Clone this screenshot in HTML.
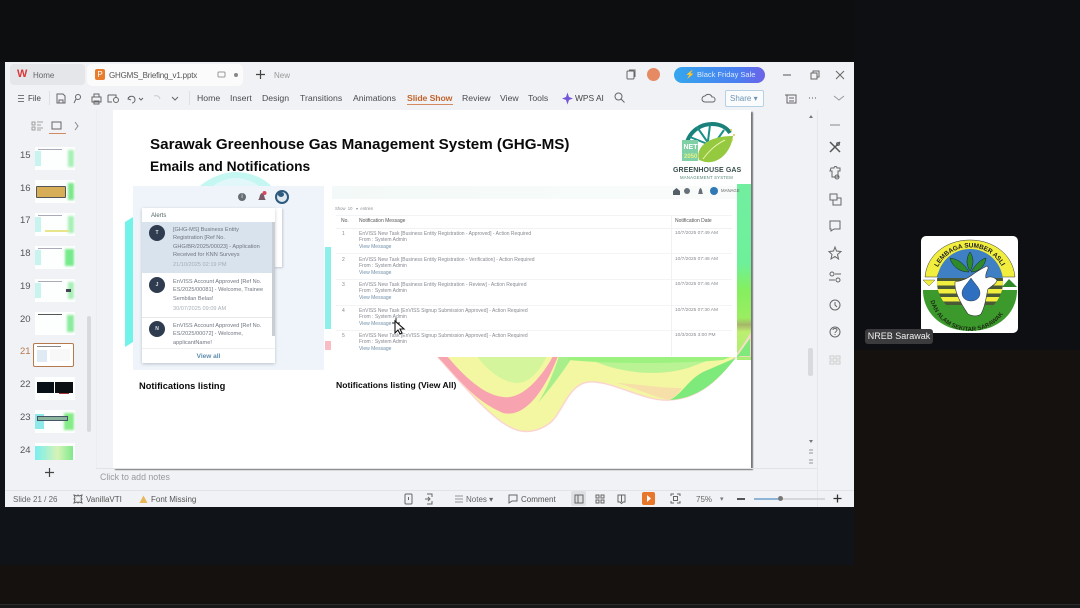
<!DOCTYPE html>
<html><head><meta charset="utf-8"><style>
html,body{margin:0;padding:0;width:1080px;height:608px;overflow:hidden;background:#14110f;font-family:"Liberation Sans",sans-serif}
.a{position:absolute;white-space:nowrap}
#w{position:absolute;left:5px;top:62px;width:849px;height:445px;background:#f1f2f5;overflow:hidden;filter:blur(.35px)}
.t{position:absolute;white-space:nowrap;color:#555;font-size:8px;line-height:11px}
.m{top:31px;font-size:8.700px;color:#4b4b4f}
.n{position:absolute;left:15px;font-size:9.500px;line-height:11px;color:#555}
.th{position:absolute;left:30px;width:40px;height:23px;background:#fdfefe;overflow:hidden}
.b1{position:absolute;left:0;top:4px;width:6px;height:15px;background:#c8f3ef}
.b2{position:absolute;right:1px;top:3px;width:6px;height:17px;background:#a8f0b8;filter:blur(1px)}
.l{position:absolute;left:3px;top:2px;width:24px;height:1px;background:#aab}
svg{position:absolute;overflow:visible}
.ic{fill:none;stroke:#666;stroke-width:1}
#s{position:absolute;left:108px;top:48px;width:638px;height:358px;background:#fff;box-shadow:2px 2px 1px #77787a;overflow:hidden}
.h{position:absolute;font-weight:bold;color:#0a0a0a;white-space:nowrap}
.c{position:absolute;white-space:nowrap;font-size:5px;line-height:6.400px;color:#858990}
.al{position:absolute;left:31px;font-size:5.600px;line-height:8.300px;color:#6f7680;white-space:nowrap}
.av{position:absolute;left:7px;width:16px;height:16px;border-radius:50%;background:#2f3b4e;color:#dfe3e8;font-size:5px;line-height:16px;text-align:center;font-weight:bold}
</style></head><body>
<div class="a" style="left:0;top:0;width:854px;height:565px;background:#101318"></div>
<div class="a" style="left:0;top:0;width:854px;height:62px;background:#0d0e10"></div>
<div class="a" style="left:854px;top:0;width:226px;height:350px;background:#0e0f13"></div>
<div class="a" style="left:0;top:604px;width:1080px;height:1px;background:#2b2b2b"></div>
<div class="a" style="left:0;top:605px;width:1080px;height:3px;background:#181818"></div>
<div id="w">
 <!-- tabs -->
 <div class="a" style="left:5px;top:2px;width:75px;height:21px;background:#e5e6ea;border-radius:4px"></div>
 <div class="a" style="left:12px;top:7px;color:#d8393b;font-weight:bold;font-size:11px;line-height:11px">W</div>
 <div class="t" style="left:28px;top:8px;color:#666">Home</div>
 <div class="a" style="left:82px;top:2px;width:156px;height:22px;background:#fbfbfc;border-radius:5px"></div>
 <div class="a" style="left:90px;top:7px;width:10px;height:11px;background:#e87d2e;border-radius:2px;color:#fff;font-size:8px;line-height:11px;text-align:center">P</div>
 <div class="t" style="left:104px;top:8px;color:#555;letter-spacing:-.18px">GHGMS_Briefing_v1.pptx</div>
 <svg style="left:212px;top:9px" width="10" height="9"><rect x="1" y="1" width="7" height="5" rx="1" class="ic" style="stroke:#999"/></svg>
 <div class="a" style="left:229px;top:11px;width:4px;height:4px;background:#888;border-radius:50%"></div>
 <svg style="left:250px;top:7px" width="11" height="11"><path d="M5.500 1v9M1 5.500h9" stroke="#444" stroke-width="1.200"/></svg>
 <div class="t" style="left:269px;top:8px;color:#999">New</div>
 <!-- right title -->
 <svg style="left:621px;top:7px" width="11" height="11"><rect x="1" y="2" width="7" height="8" class="ic" stroke-width="1.400" rx="1"/><path d="M3 1h6v7" class="ic"/></svg>
 <div class="a" style="left:642px;top:6px;width:13px;height:13px;border-radius:50%;background:#e58a63"></div>
 <div class="a" style="left:669px;top:5px;width:91px;height:16px;border-radius:8px;background:linear-gradient(90deg,#35a6ee,#4a7ff0 70%,#6c62e8);color:#dce9fb;font-size:7.500px;line-height:16px"><span style="margin-left:11px;color:#fff;font-size:8px">⚡</span> Black Friday Sale</div>
 <svg style="left:778px;top:8px" width="60" height="10"><path d="M0 5h8" stroke="#555"/><path d="M28 3h6v6h-6zM30 3V1h6v6h-2" class="ic"/><path d="M53 1l8 8M61 1l-8 8" stroke="#666"/></svg>
 <!-- menu -->
 <svg style="left:12px;top:32px" width="9" height="9"><path d="M1 1.500h6M1 4.500h6M1 7.500h6" stroke="#777"/></svg>
 <div class="t" style="left:23px;top:31px;color:#444">File</div>
 <div class="a" style="left:44px;top:29px;width:1px;height:14px;background:#e0e0e3"></div>
 <svg style="left:51px;top:31px" width="125" height="12">
  <path d="M1 1h6l2 2v7H1z" class="ic"/><path d="M3 10V7h4v3" class="ic"/>
  <circle cx="22" cy="4" r="2.500" class="ic"/><path d="M20 6l-2 4" class="ic"/>
  <path d="M36 4h9v5h-9zM38 4V1h5v3M38 8h5v3h-5z" class="ic"/>
  <path d="M52 2h8v3M52 2v7h4" class="ic"/><circle cx="60" cy="7" r="2.500" class="ic"/>
  <path d="M74 3l-2 3 3 1M72 5c3-3 7-2 7 2 0 1-1 3-3 3" class="ic"/>
  <path d="M83 5l2 2 2-2" class="ic"/><path d="M98 3c3-1 5 0 6 3" fill="none" stroke="#ccc"/>
  <path d="M116 4l3 3 3-3" class="ic"/>
 </svg>
 <div class="a" style="left:184px;top:29px;width:1px;height:14px;background:#e0e0e3"></div>
 <div class="t m" style="left:192px">Home</div>
 <div class="t m" style="left:225px">Insert</div>
 <div class="t m" style="left:257px">Design</div>
 <div class="t m" style="left:295px">Transitions</div>
 <div class="t m" style="left:348px">Animations</div>
 <div class="t m" style="left:402px;color:#c1652f;font-weight:bold;letter-spacing:-.1px">Slide Show</div>
 <div class="a" style="left:402px;top:42px;width:46px;height:1px;background:#d28a5e"></div>
 <div class="t m" style="left:457px">Review</div>
 <div class="t m" style="left:495px">View</div>
 <div class="t m" style="left:523px">Tools</div>
 <svg style="left:557px;top:30px" width="11" height="13"><path d="M5.500 0.500l1.500 4.500 4 1.500-4 1.500-1.500 4.500-1.500-4.500-4-1.500 4-1.500z" fill="#7457d8"/></svg>
 <div class="t m" style="left:570px;color:#444;font-size:8.400px">WPS AI</div>
 <svg style="left:609px;top:30px" width="11" height="11"><circle cx="4.500" cy="4.500" r="3.500" class="ic"/><path d="M7 7l3.500 3.500" class="ic"/></svg>
 <svg style="left:697px;top:31px" width="13" height="11"><path d="M3 9a3 3 0 0 1 0-6 4 4 0 0 1 7 1 2.500 2.500 0 0 1 1 5z" class="ic"/></svg>
 <div class="a" style="left:720px;top:28px;width:37px;height:15px;border:1px solid #b6d0e4;background:#fafbfc;border-radius:2px;color:#6e94b5;font-size:8px;line-height:15px;text-indent:4px">Share ▾</div>
 <svg style="left:780px;top:31px" width="60" height="11"><path d="M2 2h9v8H2zM0 2h3M4 5h5M4 8h5" class="ic"/><path d="M24 5h1M27 5h1M30 5h1" stroke="#555"/><path d="M49 3l5 4 5-4" stroke="#999" fill="none"/></svg>
 <!-- left panel -->
 <svg style="left:26px;top:58px" width="70" height="14"><path d="M1 2h3v3H1zM1 7h3v3H1zM6 2h6M6 5h4M6 8h6M6 10h4" stroke="#888" fill="none" stroke-width=".8"/><rect x="21" y="2" width="9" height="7" class="ic"/><path d="M44 2l3 4-3 4" stroke="#888" fill="none"/></svg>
 <div class="a" style="left:44px;top:71px;width:17px;height:1px;background:#d28a5e"></div>
 <div class="a" style="left:91px;top:48px;width:1px;height:358px;background:#ecedf0"></div>

 <div class="n" style="top:88px">15</div><div class="n" style="top:121px">16</div><div class="n" style="top:153px">17</div><div class="n" style="top:186px">18</div><div class="n" style="top:219px">19</div><div class="n" style="top:252px">20</div>
 <div class="n" style="top:284px;color:#b47a50">21</div><div class="n" style="top:317px">22</div><div class="n" style="top:350px">23</div><div class="n" style="top:383px">24</div>
 <div class="th" style="top:85px"><i class="b1"></i><i class="b2"></i><i class="l"></i></div>
 <div class="th" style="top:118px"><i class="b2" style="background:#7ce88b"></i><i class="a" style="left:1px;top:6px;width:28px;height:10px;background:#d7ad57;border:1px solid #555;border-radius:1px"></i></div>
 <div class="th" style="top:151px"><i class="b1"></i><i class="b2"></i><i class="l"></i><i class="a" style="left:10px;top:17px;width:24px;height:2px;background:#e8e58a"></i></div>
 <div class="th" style="top:184px"><i class="b1"></i><i class="b2" style="background:#75ea8b;width:9px"></i><i class="l"></i></div>
 <div class="th" style="top:217px"><i class="b1"></i><i class="b2"></i><i class="l"></i><i class="a" style="left:31px;top:10px;width:5px;height:3px;background:#445"></i></div>
 <div class="th" style="top:250px"><i class="b2" style="background:#8ceb9e;width:7px"></i><i class="l" style="background:#555"></i></div>
 <div class="a" style="left:28px;top:281px;width:39px;height:22px;border:1.500px solid #b5794c;border-radius:2px;background:#fff;overflow:hidden"><i class="a" style="left:3px;top:6px;width:10px;height:12px;background:#dfeaf5"></i><i class="a" style="left:16px;top:5px;width:20px;height:12px;background:#f8f8f8"></i><i class="l" style="background:#888"></i></div>
 <div class="th" style="top:315px"><i class="a" style="left:2px;top:5px;width:17px;height:11px;background:#071016"></i><i class="a" style="left:20px;top:5px;width:18px;height:11px;background:#0c1012"></i><i class="a" style="left:24px;top:16px;width:10px;height:1px;background:#a33"></i></div>
 <div class="th" style="top:348px"><i class="b1" style="background:#8eeaea;width:9px"></i><i class="b2" style="background:#86ec88;width:10px"></i><i class="a" style="left:2px;top:6px;width:29px;height:3px;background:#8cb59e;border:1px solid #456"></i></div>
 <div class="th" style="top:381px;height:17px"><i class="a" style="left:0;top:3px;width:38px;height:14px;background:linear-gradient(90deg,#7aeef0,#d6f3b6 60%,#7fe98c)"></i></div>
 <div class="a" style="left:82px;top:254px;width:4px;height:116px;background:#d8d9dc;border-radius:2px"></div>
 <svg style="left:39px;top:405px" width="11" height="11"><path d="M5.500 1v9M1 5.500h9" stroke="#444" stroke-width="1.200"/></svg>

 <!-- slide -->
 <div id="s">
  <div class="a" style="left:624px;top:74px;width:14px;height:176px;background:linear-gradient(180deg,#72eea0 0,#6ef09a 45%,#85ef5f 60%,#9aee60 76%,#a8b56a 80%,#bcef70 84%,#a9ee74 100%)"></div>
  <svg style="left:0;top:0" width="638" height="358">
   <path d="M87 76C100 65 115 62 122 62C135 62 150 67 158 76Z" fill="#c4f6f2"/>
   <path d="M100 76C108 70 116 68 122 68C130 68 140 71 146 76Z" fill="#e2f7f9"/>
   <path d="M12 112L20 107V232L12 237Z" fill="#72f3ea"/>
   <path d="M212 137h6v82h-6z" fill="#8cefe9"/>
   <path d="M212 231h6v9h-6z" fill="#f9bcc5"/>
   <!-- wave -->
   <path d="M324 246C350 275 375 305 395 316C410 325 425 322 437 313C450 302 455 275 475 272C500 270 530 292 557 290C590 288 612 265 637 225V246Z" fill="#f3f7a2" stroke="#fbd5cf" stroke-width="1.500"/>
   <path d="M364 246C375 262 392 273 404 273C418 273 428 258 434 246Z" fill="#d4f59c"/>
   <path d="M324 246C345 268 360 290 390 303C410 308 430 285 445 246H440C430 265 410 290 390 287C370 285 350 265 334 246Z" fill="#f8a4b0"/>
   <path d="M446 246H460C450 262 440 275 425 293C433 280 440 265 446 246Z" fill="#a8ef8c"/>
   <path d="M470 246C500 262 540 268 575 258L607 246Z" fill="#b9f394"/>
   <path d="M455 246H620L610 250C560 254 500 254 455 250Z" fill="#9df27f"/>
   <path d="M557 290C570 283 575 270 590 262L627 246H637V228C612 265 590 288 557 290Z" fill="#7dea7b"/>
   <path d="M504 273C525 279 540 287 557 290C563 286 566 282 569 278C545 278 525 274 504 273Z" fill="#f6dfa8"/>
  </svg>

  <div class="h" style="left:37px;top:26px;font-size:15.200px;line-height:17px">Sarawak Greenhouse Gas Management System (GHG-MS)</div>
  <div class="h" style="left:37px;top:49px;font-size:13.800px;line-height:16px">Emails and Notifications</div>

  <!-- logo -->
  <svg style="left:569px;top:12px" width="56" height="44">
   <path d="M4 24C7 8 20 2 30 2c9 0 15 4 18 9" fill="none" stroke="#19807a" stroke-width="4"/>
   <path d="M15 5l14 20M28 3l-3 24M8 15l20 8M42 8L30 25" stroke="#1c9088" stroke-width="2"/>
   <path d="M17 38c-4-12 8-24 34-24-2 16-14 28-28 26z" fill="#95c93f"/>
   <path d="M21 37c6-8 12-14 22-19" stroke="#e9f3ae" fill="none"/>
   <rect x="0" y="18" width="16" height="21" fill="#7fd0a4"/>
   <text x="1.500" y="27" font-size="7" font-weight="bold" fill="#fff" font-family="Liberation Sans">NET</text>
   <text x="2" y="36" font-size="6" font-weight="bold" fill="#e8f080" font-family="Liberation Sans">2050</text>
   <circle cx="49" cy="8" r="1" fill="#d9c948"/><circle cx="52" cy="13" r="1" fill="#d9c948"/><circle cx="50" cy="18" r="1" fill="#d9c948"/>
  </svg>
  <div class="a" style="left:560px;top:56px;font-size:7px;line-height:9px;font-weight:bold;color:#3a4f4c;letter-spacing:.1px">GREENHOUSE GAS</div>
  <div class="a" style="left:567px;top:65px;font-size:4.300px;line-height:5px;color:#587;letter-spacing:.2px">MANAGEMENT SYSTEM</div>

  <!-- left panel image -->
  <div class="a" style="left:20px;top:76px;width:191px;height:184px;background:#eff4fa"></div>
  <div class="a" style="left:125px;top:83px;width:8px;height:8px;border-radius:50%;background:#666d75;color:#fff;font-size:6px;line-height:8px;text-align:center">i</div>
  <svg style="left:144px;top:81px" width="10" height="11"><path d="M1 9c2-1 1-6 4-7 3 1 2 6 4 7z" fill="#775a6a"/><circle cx="7.500" cy="2" r="2" fill="#d9475e"/></svg>
  <div class="a" style="left:162px;top:80px;width:10px;height:10px;border-radius:50%;border:2px solid #2c5a7e;background:#dfe8ef"></div>
  <div class="a" style="left:165px;top:82px;width:6px;height:5px;border-radius:50%;background:#2c5a7e"></div>
  <div class="a" style="left:160px;top:98px;width:9px;height:59px;background:#fff;box-shadow:1px 1px 2px rgba(90,100,120,.3)"></div>
  <div class="a" style="left:29px;top:98px;width:133px;height:155px;background:#fff;box-shadow:0 1px 3px rgba(90,100,120,.35);border-radius:1px;overflow:hidden">
   <div class="a" style="left:9px;top:4px;font-size:6px;line-height:8px;color:#566">Alerts</div>
   <div class="a" style="left:0;top:14px;width:130px;height:51px;background:#d9e3ed"></div>
   <div class="av" style="top:17px">T</div>
   <div class="al" style="top:18px">[GHG-MS] Business Entity<br>Registration [Ref No.<br>GHG/BR/2025/00023] - Application<br>Received for KNN Surveys</div>
   <div class="al" style="top:53px;color:#a3adb8">21/10/2025 02:19 PM</div>
   <div class="av" style="top:69px">J</div>
   <div class="al" style="top:70px">EnVISS Account Approved [Ref No.<br>ES/2025/00081] - Welcome, Trainee<br>Sembilan Belas!</div>
   <div class="al" style="top:97px;color:#a9b0b8">30/07/2025 09:09 AM</div>
   <div class="a" style="left:0;top:109px;width:130px;height:1px;background:#e5e7ea"></div>
   <div class="av" style="top:113px">N</div>
   <div class="al" style="top:114px">EnVISS Account Approved [Ref No.<br>ES/2025/00072] - Welcome,<br>applicantName!</div>
   <div class="a" style="left:130px;top:14px;width:3px;height:114px;background:#c9cdd4"></div>
   <div class="a" style="left:0;top:140px;width:133px;height:15px;background:#fff;border-top:1px solid #eef0f2;text-align:center;font-size:6.500px;line-height:15px;color:#5c8cae;font-weight:bold">View all</div>
  </div>
  <div class="h" style="left:26px;top:271px;font-size:9.300px;line-height:11px">Notifications listing</div>
  <div class="h" style="left:223px;top:270px;font-size:8.600px;line-height:11px">Notifications listing (View All)</div>

  <!-- table image -->
  <div class="a" style="left:219px;top:76px;width:405px;height:171px;background:#fff"></div>
  <div class="a" style="left:219px;top:76px;width:405px;height:13px;background:linear-gradient(90deg,#f3f9f8,#f7fbf9 60%,#f8fbf9)"></div>
  <svg style="left:559px;top:76px" width="30" height="10"><path d="M1 5l3.500-3 3.500 3v4H1z" fill="#555f66"/><circle cx="15" cy="5" r="3" fill="#667078"/><path d="M26 8c1-1 .5-5 2.500-6 2 1 1.500 5 2.500 6z" fill="#667078"/></svg>
  <div class="a" style="left:597px;top:77px;width:8px;height:8px;background:#2f79b4;border-radius:50%"></div>
  <div class="c" style="left:608px;top:78px;font-size:4.300px;color:#666">MANAGE</div>
  <div class="c" style="left:222px;top:96px;font-size:4.200px;color:#8a8f93">Show &nbsp;10 &nbsp; ▾ &nbsp;entries</div>
  <div class="a" style="left:223px;top:105px;width:396px;height:1px;background:#f3f4f5"></div>
  <div class="a" style="left:223px;top:118px;width:396px;height:1px;background:#f0f1f3"></div>
  <div class="a" style="left:223px;top:143px;width:396px;height:1px;background:#f3f4f5"></div>
  <div class="a" style="left:223px;top:169px;width:396px;height:1px;background:#f3f4f5"></div>
  <div class="a" style="left:223px;top:195px;width:396px;height:1px;background:#f3f4f5"></div>
  <div class="a" style="left:223px;top:220px;width:396px;height:1px;background:#f3f4f5"></div>
  <div class="a" style="left:558px;top:105px;width:1px;height:141px;background:#f0f1f3"></div>
  <div class="c" style="left:228px;top:108px;color:#555">No.</div>
  <div class="c" style="left:246px;top:108px;color:#555">Notification Message</div>
  <div class="c" style="left:562px;top:108px;color:#555">Notification Date</div>

  <div class="c" style="left:229px;top:121px">1</div><div class="c" style="left:246px;top:121px">EnVISS New Task [Business Entity Registration - Approved] - Action Required<br>From : System Admin<br><span style="color:#6f8fa9">View Message</span></div><div class="c" style="left:562px;top:121px;font-size:4.800px">10/7/2025 07:49 AM</div>
  <div class="c" style="left:229px;top:147px">2</div><div class="c" style="left:246px;top:147px">EnVISS New Task [Business Entity Registration - Verification] - Action Required<br>From : System Admin<br><span style="color:#6f8fa9">View Message</span></div><div class="c" style="left:562px;top:147px;font-size:4.800px">10/7/2025 07:48 AM</div>
  <div class="c" style="left:229px;top:172px">3</div><div class="c" style="left:246px;top:172px">EnVISS New Task [Business Entity Registration - Review] - Action Required<br>From : System Admin<br><span style="color:#6f8fa9">View Message</span></div><div class="c" style="left:562px;top:172px;font-size:4.800px">10/7/2025 07:46 AM</div>
  <div class="c" style="left:229px;top:198px">4</div><div class="c" style="left:246px;top:198px">EnVISS New Task [EnVISS Signup Submission Approved] - Action Required<br>From : System Admin<br><span style="color:#6f8fa9">View Message</span></div><div class="c" style="left:562px;top:198px;font-size:4.800px">10/7/2025 07:30 AM</div>
  <div class="c" style="left:229px;top:223px">5</div><div class="c" style="left:246px;top:223px">EnVISS New Task [EnVISS Signup Submission Approved] - Action Required<br>From : System Admin<br><span style="color:#6f8fa9">View Message</span></div><div class="c" style="left:562px;top:223px;font-size:4.800px">10/3/2025 3:00 PM</div>
  <!-- cursor -->
  <svg style="left:278px;top:208px" width="16" height="18">
   <path d="M5 0v9M1 5h8" stroke="#222" stroke-width="1"/>
   <path d="M4 3l0 12 3-3 2 4 2-1-2-4h4z" fill="#fff" stroke="#111" stroke-width="1.100"/>
  </svg>
 </div>

 <!-- right scroll + sidebar -->
 <div class="a" style="left:803px;top:286px;width:5px;height:28px;background:#d9dadd;border-radius:2px"></div>
 <svg style="left:802px;top:52px" width="8" height="6"><path d="M2 4l2-3 2 3z" fill="#777"/></svg>
 <svg style="left:802px;top:377px" width="8" height="26"><path d="M2 1h4l-2 3z" fill="#777"/><path d="M2 11h4M2 14h4M2 21h4M2 24h4" stroke="#777" stroke-width=".8"/></svg>
 <div class="a" style="left:812px;top:48px;width:1px;height:397px;background:#e6e7ea"></div>
 <svg style="left:822px;top:58px" width="16" height="245">
  <path d="M3 5h10" stroke="#888"/>
  <path d="M3 22l10 10M13 22L3 32" stroke="#555" stroke-width="1.500"/><circle cx="11" cy="24" r="1.500" class="ic"/>
  <path d="M4 48h3a1.500 1.500 0 0 1 3 0h3v3h-2v6H5v-6H3z" class="ic"/><circle cx="10" cy="57" r="2" class="ic"/>
  <path d="M3 74h7v6H3zM6 80v5h8v-7h-4" class="ic"/>
  <path d="M3 101h10v8H7l-3 2v-2H3z" class="ic"/>
  <path d="M8 127l1.500 4 4.500.5-3.500 3 1 4.500-3.500-2.500-4 2.500 1-4.500-3-3 4.500-.5z" class="ic"/>
  <circle cx="5" cy="154" r="2" class="ic"/><path d="M8 154h6M2 160h6" class="ic"/><circle cx="11" cy="160" r="2" class="ic"/>
  <circle cx="8" cy="185" r="5" class="ic"/><path d="M8 182v3l2 2" class="ic"/>
  <circle cx="8" cy="212" r="5" class="ic"/><path d="M6 210c0-2 4-2 4 0s-2 1.500-2 3M8 214v1" class="ic"/>
  <path d="M3 236h4v3H3zM9 236h4v3H9zM3 241h4v3H3zM9 241h4v3H9z" fill="none" stroke="#ccc"/>
 </svg>
 <!-- notes -->
 <div class="a" style="left:91px;top:406px;width:721px;height:1px;background:#e2e3e6"></div>
 <div class="t" style="left:95px;top:410px;font-size:8.800px;color:#9a9a9e">Click to add notes</div>
 <!-- status -->
 <div class="a" style="left:0;top:428px;width:849px;height:1px;background:#e2e3e6"></div>
 <div class="t" style="left:8px;top:432px;color:#666">Slide 21 / 26</div>
 <svg style="left:68px;top:432px" width="10" height="10"><path d="M1 1l3 1 1-1 1 1 3-1-1 3 1 1-1 1 1 3-3-1-1 1-1-1-3 1 1-3-1-1 1-1z" class="ic"/></svg>
 <div class="t" style="left:81px;top:432px;color:#555">VanillaVTI</div>
 <svg style="left:134px;top:433px" width="9" height="9"><path d="M4.500 0.500L8.500 8h-8z" fill="#e7b75a"/></svg>
 <div class="t" style="left:146px;top:432px;color:#555">Font Missing</div>
 <svg style="left:399px;top:431px" width="35" height="12"><rect x="1" y="1" width="7" height="10" rx="1" class="ic"/><path d="M4.500 4v3" class="ic"/><path d="M23 1h5v3M23 11h5V8M21 6h5M24 4l2 2-2 2" class="ic"/></svg>
 <svg style="left:449px;top:432px" width="10" height="10"><path d="M1 2h8M1 5h8M1 8h8" stroke="#777" stroke-width=".8"/></svg>
 <div class="t" style="left:461px;top:432px;color:#666">Notes ▾</div>
 <svg style="left:503px;top:432px" width="10" height="10"><path d="M1 1h8v6H4L1 9z" class="ic"/></svg>
 <div class="t" style="left:516px;top:432px;color:#555">Comment</div>
 <div class="a" style="left:566px;top:429px;width:15px;height:15px;background:#dfe0e3;border-radius:2px"></div>
 <svg style="left:569px;top:432px" width="60" height="10"><rect x="1" y="1" width="8" height="8" class="ic"/><path d="M4 1v8" class="ic"/><path d="M22 1h3v3h-3zM27 1h3v3h-3zM22 6h3v3h-3zM27 6h3v3h-3z" class="ic"/><path d="M44 1h7v7h-2l-1.500 1.500L46 8h-2zM47.500 1v7" class="ic"/></svg>
 <div class="a" style="left:637px;top:430px;width:13px;height:13px;background:#e8762b;border-radius:2px"></div>
 <svg style="left:641px;top:433px" width="6" height="7"><path d="M1 0l4 3.500L1 7z" fill="#fff"/></svg>
 <svg style="left:665px;top:431px" width="11" height="11"><path d="M1 3V1h3M7 1h3v2M10 8v2H7M4 10H1V8" class="ic"/><rect x="3.500" y="3.500" width="4" height="4" class="ic"/></svg>
 <div class="t" style="left:691px;top:432px;color:#666">75%</div>
 <div class="t" style="left:715px;top:432px;font-size:7px;color:#777">▾</div>
 <div class="a" style="left:732px;top:436px;width:8px;height:1.500px;background:#555"></div>
 <div class="a" style="left:749px;top:436px;width:24px;height:1.500px;background:#8fb5d6"></div>
 <div class="a" style="left:773px;top:436px;width:47px;height:1.500px;background:#d6d7da"></div>
 <div class="a" style="left:773px;top:434px;width:5px;height:5px;border-radius:50%;background:#777"></div>
 <svg style="left:828px;top:432px" width="9" height="9"><path d="M4.500 .5v8M.5 4.500h8" stroke="#333" stroke-width="1.300"/></svg>
</div>

<!-- participant tile -->
<div class="a" style="left:921px;top:236px;width:97px;height:97px;background:#fff;border-radius:5px;overflow:hidden;filter:blur(.3px)">
 <svg width="97" height="97" style="left:0;top:0">
  <defs>
   <path id="tpa" d="M16 33A36 36 0 0 1 82 33"/>
   <path id="tpb" d="M9 63A41 41 0 0 0 89 63"/>
   <clipPath id="cc"><circle cx="49" cy="46" r="33"/></clipPath>
  </defs>
  <path d="M4 41C6 18 26 4 49 4s43 14 45 37H81C79 29 65 21 49 21S19 29 16 41z" fill="#f2ee3d" stroke="#333" stroke-width=".5"/>
  <path d="M2 44h12l-6 6z" fill="#f2ee3d" stroke="#444" stroke-width=".4"/>
  <path d="M81 51l7-8 8 8z" fill="#2f8a2a"/>
  <path d="M2 54h94c0 24-20 41-47 41S2 78 2 54z" fill="#3c9a2d"/>
  <g clip-path="url(#cc)">
   <rect x="14" y="12" width="70" height="34" fill="#3f7fc4"/>
   <rect x="14" y="42" width="70" height="30" fill="#4b5a36"/>
   <path d="M14 45h70v4.500H14zM14 53h70v4.500H14zM14 61h70v4.500H14z" fill="#f2ee3d"/>
   <rect x="14" y="69" width="70" height="12" fill="#3c9a2d"/>
  </g>
  <path d="M48 36c-4-7-10-13-19-14 2 8 9 14 19 14zM50 36c4-7 10-13 15-14-1 8-7 14-15 14zM49 35c-4-6-4-13 0-19 4 6 4 13 0 19z" fill="#2f8a2a" stroke="#123" stroke-width=".5"/>
  <path d="M34 46c6-1 12-3 17-7 4-3 11-7 15-9 2 1 1 3 0 5-1 3-2 5-1 7 4-2 8-1 11 2 0 3-5 6-9 9-2 7-2 16-7 25-4 3-9 2-13 0C40 68 33 56 34 46z" fill="#fff" stroke="#333" stroke-width=".6"/>
  <path d="M50 42c4 6 9 10 9 15 0 5-4 8-9 8s-9-3-9-8c0-5 5-9 9-15z" fill="#2f6fc0" stroke="#123" stroke-width=".4"/>
  <g font-family="Liberation Sans" font-weight="bold" fill="#222">
   <text font-size="6.500"><textPath href="#tpa" textLength="78" startOffset="2">LEMBAGA SUMBER ASLI</textPath></text>
   <text font-size="6" fill="#1c2b12"><textPath href="#tpb" textLength="92" startOffset="2">DAN ALAM SEKITAR SARAWAK</textPath></text>
  </g>
 </svg>
</div>
<div class="a" style="left:865px;top:329px;width:68px;height:15px;background:#3b3b3e;border-radius:3px;color:#f0f0f0;font-size:9px;line-height:15px;text-align:center">NREB Sarawak</div>
</body></html>
